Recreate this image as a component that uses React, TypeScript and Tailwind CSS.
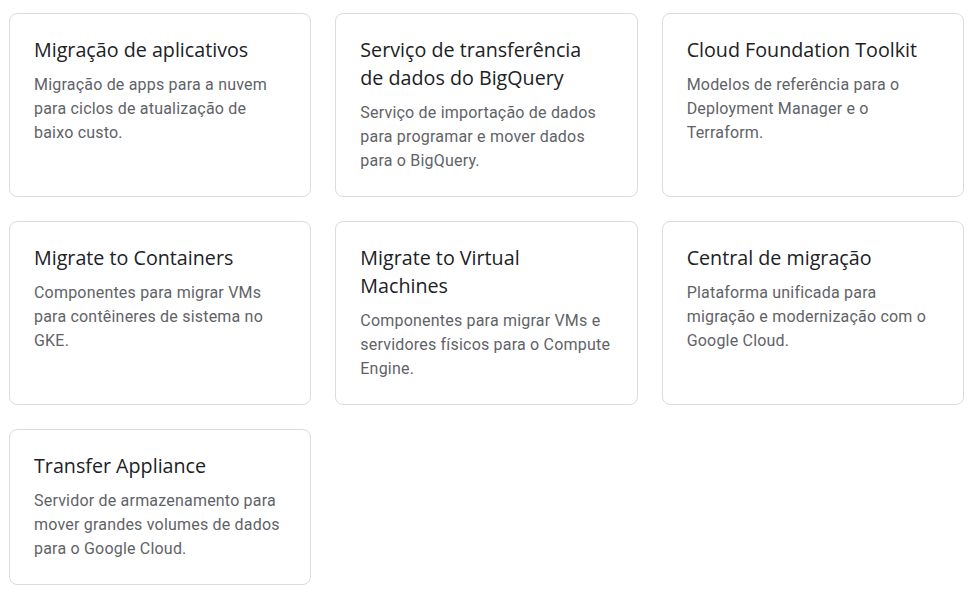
import React from "react";

const cards = [
  { t: ["Migração de aplicativos"], d: "Migração de apps para a nuvem para ciclos de atualização de baixo custo." },
  { t: ["Serviço de transferência", "de dados do BigQuery"], d: "Serviço de importação de dados para programar e mover dados para o BigQuery." },
  { t: ["Cloud Foundation Toolkit"], d: "Modelos de referência para o Deployment Manager e o Terraform." },
  { t: ["Migrate to Containers"], d: "Componentes para migrar VMs para contêineres de sistema no GKE." },
  { t: ["Migrate to Virtual", "Machines"], d: "Componentes para migrar VMs e servidores físicos para o Compute Engine." },
  { t: ["Central de migração"], d: "Plataforma unificada para migração e modernização com o Google Cloud." },
  { t: ["Transfer Appliance"], d: "Servidor de armazenamento para mover grandes volumes de dados para o Google Cloud." },
];

export default function App() {
  return (
    <div className="w-[980px] h-[595px] bg-white pl-[9px] pt-[13px]">
      <div className="grid grid-cols-3 gap-6 w-[955px]">
        {cards.map((c) => (
          <div key={c.t.join(" ")} className="rounded-lg border border-[#dadce0] bg-white px-6 pt-[22px] pb-[23px]">
            <div className="text-[19.7px] leading-7 text-[#202124]" style={{ fontFamily: "'Open Sans', Roboto, sans-serif" }}>
              {c.t.map((line) => (
                <div key={line} className="whitespace-nowrap">{line}</div>
              ))}
            </div>
            <div className="mt-[9px] text-[16px] leading-6 tracking-[0.2px] text-[#5f6368]" style={{ fontFamily: "Roboto, 'Liberation Sans', sans-serif" }}>
              {c.d}
            </div>
          </div>
        ))}
      </div>
    </div>
  );
}
